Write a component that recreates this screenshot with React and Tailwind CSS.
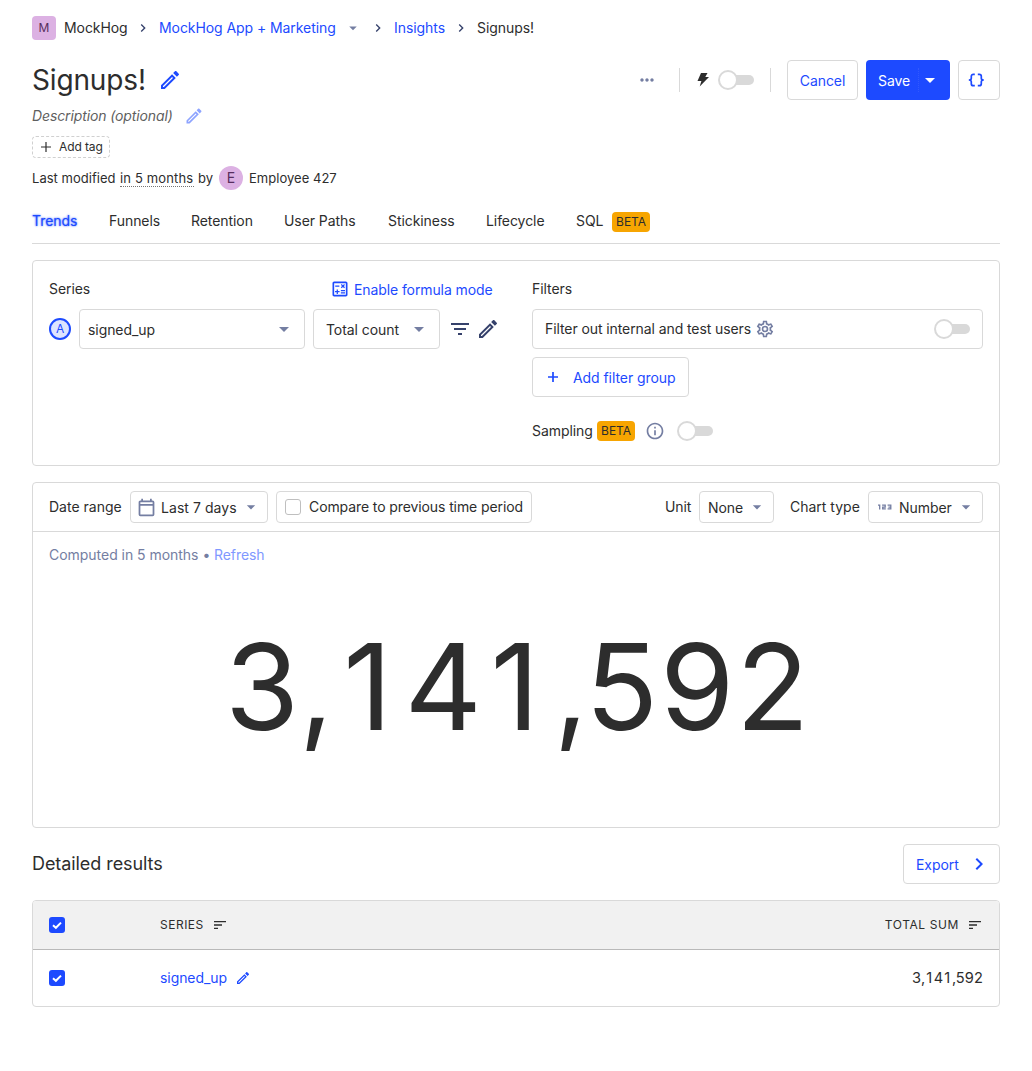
import React from 'react';
import {
  MdOutlineEdit,
  MdArrowDropDown,
  MdChevronRight,
  MdMoreHoriz,
  MdOutlineCalculate,
  MdFilterList,
  MdOutlineInfo,
  MdSort,
} from 'react-icons/md';

const box = 'flex items-center rounded border border-[#d9d9d9] bg-white';

function Toggle() {
  return (
    <span className="relative flex h-5 w-9 shrink-0 items-center">
      <span className="ml-1 h-[10px] w-8 rounded-full bg-[#d9d9d9]" />
      <span className="absolute left-0 top-0 size-5 rounded-full border-2 border-[#d9d9d9] bg-white" />
    </span>
  );
}

function Beta() {
  return (
    <span className="flex h-5 w-[38px] items-center justify-center rounded bg-[#f7a501] text-xs">BETA</span>
  );
}

function Caret({ className }) {
  return <MdArrowDropDown className={`shrink-0 ${className}`} />;
}

function Plus({ strokeWidth }) {
  return (
    <svg viewBox="0 0 16 16" className="size-4 shrink-0" fill="none" stroke="currentColor" strokeWidth={strokeWidth}>
      <path d="M8 3v10M3 8h10" />
    </svg>
  );
}

function Calendar() {
  return (
    <svg viewBox="0 0 24 24" className="size-[21px] shrink-0 text-[#747ea2]" fill="currentColor">
      <path d="M19 4h-1V2h-2v2H8V2H6v2H5c-1.110 0-2 .9-2 2v14a2 2 0 0 0 2 2h14a2 2 0 0 0 2-2V6a2 2 0 0 0-2-2m0 16H5V10h14zm0-12H5V6h14z" />
    </svg>
  );
}

function Checked() {
  return (
    <span className="flex size-4 shrink-0 items-center justify-center rounded-[3px] bg-[#1d4aff]">
      <svg viewBox="0 0 16 16" className="size-4" fill="none" stroke="#fff" strokeWidth="2">
        <path d="M4 8.2 6.9 10.8 12 5.6" />
      </svg>
    </span>
  );
}

function Gear() {
  return (
    <svg viewBox="0 0 24 24" className="size-5 shrink-0" fill="currentColor">
      <path d="M12 8a4 4 0 1 1 0 8 4 4 0 0 1 0-8m0 2a2 2 0 1 0 0 4 2 2 0 0 0 0-4m-2 12c-.25 0-.46-.18-.5-.42l-.37-2.65c-.63-.25-1.17-.59-1.69-.99l-2.49 1.01c-.22.08-.49 0-.61-.22l-2-3.46a.493.493 0 0 1 .12-.64l2.11-1.66L4.5 12l.07-1-2.11-1.63a.493.493 0 0 1-.12-.64l2-3.46c.12-.22.39-.31.61-.22l2.49 1c.52-.39 1.06-.73 1.69-.98l.37-2.65c.04-.24.25-.42.5-.42h4c.25 0 .46.18.5.42l.37 2.65c.63.25 1.17.59 1.69.98l2.49-1c.22-.09.49 0 .61.22l2 3.46c.13.22.07.49-.12.64L19.43 11l.07 1-.07 1 2.11 1.63c.19.15.25.42.12.64l-2 3.46c-.12.22-.39.31-.61.22l-2.49-1c-.52.39-1.06.73-1.69.98l-.37 2.65c-.04.24-.25.42-.5.42zm1.25-18-.37 2.61c-1.2.25-2.26.89-3.03 1.78L5.44 7.35l-.75 1.3L6.8 10.2a5.55 5.55 0 0 0 0 3.6l-2.12 1.56.75 1.3 2.43-1.04c.77.88 1.82 1.52 3.01 1.76l.37 2.62h1.52l.37-2.61c1.19-.25 2.24-.89 3.01-1.77l2.43 1.04.75-1.3-2.12-1.55c.4-1.17.4-2.44 0-3.61l2.11-1.55-.75-1.3-2.41 1.04a5.42 5.42 0 0 0-3.03-1.77L12.75 4z" />
    </svg>
  );
}

function Figures() {
  return (
    <span>
      3<span className="tracking-[0.08em]">,</span><span className="tracking-[0.105em]">1</span><span className="tracking-[0.07em]">4</span><span className="tracking-[0.12em]">1</span><span className="tracking-[-0.025em]">,</span><span className="tracking-[0.015em]">5</span><span className="tracking-[0.012em]">9</span>2
    </span>
  );
}

const tabs = [
  ['Funnels', 'w-[82px]'],
  ['Retention', 'w-[93px]'],
  ['User Paths', 'w-[104px]'],
  ['Stickiness', 'w-[98px]'],
  ['Lifecycle', 'w-[90px]'],
];

export default function App() {
  return (
    <main className="h-[1071px] w-[1032px] bg-white px-8 pt-4 font-[Inter,sans-serif] text-sm tracking-[-0.07px] text-[#2d2d2d]">
      <nav className="flex h-6 items-center">
        <span className="flex size-6 items-center justify-center rounded bg-[#dcb1e3] text-xs text-[#572e5e]">M</span>
        <span className="ml-2 w-[71px]">MockHog</span>
        <MdChevronRight className="size-4 text-[#35416b]" />
        <span className="ml-2 w-[185px] text-[#1d4aff]">MockHog App + Marketing</span>
        <Caret className="size-[18px] text-[#747ea2]" />
        <MdChevronRight className="ml-2 size-4 text-[#35416b]" />
        <span className="ml-2 w-[59px] text-[#1d4aff]">Insights</span>
        <MdChevronRight className="size-4 text-[#35416b]" />
        <span className="ml-2">Signups!</span>
      </nav>

      <header className="mt-5 flex h-10 items-center">
        <h1 className="w-[126px] text-[28px] leading-10 tracking-[-0.15px]">Signups!</h1>
        <MdOutlineEdit className="size-6 text-[#1d4aff]" />
        <div className="ml-auto flex items-center">
          <MdMoreHoriz className="size-5 text-[#747ea2]" />
          <span className="ml-[22px] h-6 w-px bg-[#d9d9d9]" />
          <svg viewBox="0 0 12 14" className="ml-[17px] h-[14px] w-3" fill="#2d2d2d">
            <path d="M4 0h6.5L8.3 4H12L2.7 13.6 4.4 8H.5z" />
          </svg>
          <span className="ml-[9px]"><Toggle /></span>
          <span className="ml-4 h-6 w-px bg-[#d9d9d9]" />
          <button className={`${box} ml-4 h-10 w-[71px] justify-center pt-0.5 text-[#1d4aff]`}>Cancel</button>
          <button className="ml-2 flex h-10 w-[84px] items-center rounded bg-[#1d4aff] pl-3 text-white">
            <span className="w-10 pt-0.5 text-left">Save</span>
            <span className="h-6 border-l border-dotted border-[#3158ff]" />
            <Caret className="-ml-px size-6" />
          </button>
          <button className={`${box} ml-2 h-10 w-[42px] pl-[9px] text-[#1d4aff]`}>
            <svg viewBox="0 0 16 14" className="h-[14px] w-4" fill="none" stroke="currentColor" strokeWidth="1.7">
              <path d="M6.800 1.300H5.300a2 2 0 0 0-2 2v1.900Q3.300 7 .8 7Q3.300 7 3.300 8.800v1.900a2 2 0 0 0 2 2h1.500M9.800 1.300H11.300a2 2 0 0 1 2 2v1.900Q13.300 7 15.800 7Q13.300 7 13.300 8.800v1.900a2 2 0 0 1-2 2H9.800" />
            </svg>
          </button>
        </div>
      </header>

      <div className="mt-1.5 flex h-5 items-center">
        <span className="w-[152px] italic tracking-[-0.12px] text-[#5f5f5f]">Description (optional)</span>
        <MdOutlineEdit className="size-5 text-[#8ea4ff]" />
      </div>
      <div className="mt-2.5 flex h-[22px] w-[78px] items-center rounded border border-dashed border-[#d0d0d0] pl-[5px] text-xs tracking-[-0.1px]">
        <Plus strokeWidth="1.2" />
        <span className="ml-[5px]">Add tag</span>
      </div>
      <div className="mt-2 flex h-6 items-center text-[13px] tracking-[0.03px]">
        <span className="w-[88px]">Last modified</span>
        <span className="w-[74px] border-b border-dotted border-[#747474] leading-4 tracking-[0.15px]">in 5 months</span>
        <span className="ml-1 w-[21px]">by</span>
        <span className="flex size-6 items-center justify-center rounded-full bg-[#dcb1e3] text-sm text-[#572e5e]">E</span>
        <span className="ml-1.5">Employee 427</span>
      </div>

      <div className="mt-[11px] flex h-[43px] items-center border-b border-[#d9d9d9] pb-0.5">
        <span className="w-[77px] text-[#1d4aff] [text-shadow:0_0_2px_#1d4aff]">Trends</span>
        {tabs.map(([name, width]) => <span key={name} className={width}>{name}</span>)}
        <span className="w-9">SQL</span>
        <span className="pt-0.5"><Beta /></span>
      </div>

      <section className="mt-4 flex h-[206px] rounded border border-[#d9d9d9] px-4 pt-4">
        <div className="w-[483px]">
          <div className="flex h-6 items-center">
            <span>Series</span>
            <span className="ml-auto mr-10 flex items-center text-[#1d4aff]">
              <MdOutlineCalculate className="size-5" />
              <span className="ml-1 w-[138px] whitespace-nowrap pt-0.5 tracking-[-0.1px]">Enable formula mode</span>
            </span>
          </div>
          <div className="mt-2 flex h-10 items-center">
            <span className="flex size-[22px] items-center justify-center rounded-full border-2 border-[#1d4aff] bg-[#dde4ff] text-xs text-[#1d4aff]">A</span>
            <button className={`${box} ml-2 h-10 w-[226px] justify-between pl-2 pr-2`}>
              <span className="pt-0.5">signed_up</span><Caret className="size-6 text-[#747ea2]" />
            </button>
            <button className={`${box} ml-2 h-10 w-[127px] justify-between pl-3 pr-2`}>
              <span className="pt-0.5">Total count</span><Caret className="size-6 text-[#747ea2]" />
            </button>
            <MdFilterList className="ml-2 size-6 text-[#35416b]" />
            <MdOutlineEdit className="ml-1 size-6 text-[#35416b]" />
          </div>
        </div>
        <div className="flex-1">
          <div className="flex h-6 items-center">Filters</div>
          <div className={`${box} mt-2 h-10 px-3`}>
            <span className="w-[206px] whitespace-nowrap tracking-[-0.09px]">Filter out internal and test users</span>
            <span className="ml-1 text-[#747ea2]"><Gear /></span>
            <span className="ml-auto"><Toggle /></span>
          </div>
          <button className={`${box} mt-2 h-10 w-[157px] pl-3 text-[#1d4aff]`}>
            <Plus strokeWidth="1.7" />
            <span className="ml-3 pt-0.5">Add filter group</span>
          </button>
          <div className="mt-6 flex h-5 items-center">
            <span className="w-[65px]">Sampling</span>
            <Beta />
            <MdOutlineInfo className="ml-2.5 size-5 text-[#747ea2]" />
            <span className="ml-3"><Toggle /></span>
          </div>
        </div>
      </section>

      <section className="mt-4 h-[346px] rounded border border-[#d9d9d9]">
        <div className="flex h-[49px] items-center border-b border-[#d9d9d9] px-4">
          <span className="w-[81px] tracking-normal">Date range</span>
          <button className={`${box} h-8 w-[138px] pl-[5px]`}>
            <Calendar />
            <span className="ml-1 w-20 pt-0.5 text-left tracking-[0.05px]">Last 7 days</span>
            <Caret className="size-5 text-[#747ea2]" />
          </button>
          <div className={`${box} ml-2 h-8 w-64 pl-2`}>
            <span className="size-4 rounded-[3px] border border-[#bfbfbf]" />
            <span className="ml-2 whitespace-nowrap tracking-[-0.1px]">Compare to previous time period</span>
          </div>
          <span className="ml-auto w-[34px]">Unit</span>
          <button className={`${box} h-8 w-[75px] justify-between pl-2 pr-1.5`}>
            <span className="pt-0.5">None</span><Caret className="size-5 text-[#747ea2]" />
          </button>
          <span className="ml-4 w-[78px] tracking-normal">Chart type</span>
          <button className={`${box} h-8 w-[115px] pl-2`}>
            <svg viewBox="0 0 16 16" className="size-4" fill="none" stroke="#747ea2" strokeWidth="1.3">
              <path d="M1 6.200H2.700V10.600M5.100 6.200H8.200V8.100H5.700V9.900H8.800M10.600 6.200H13.800V9.900H10.600M11.400 8.050H13.800" />
            </svg>
            <span className="ml-1.5 w-[57px] pt-0.5 text-left">Number</span>
            <Caret className="size-5 text-[#747ea2]" />
          </button>
        </div>
        <div className="mt-3 flex h-[22px] items-center px-4 text-[#747ea2]">
          <span className="w-[161px] whitespace-nowrap tracking-[-0.03px]">Computed in 5 months •</span><span className="ml-1 text-[#7f98ff]">Refresh</span>
        </div>
        <div className="flex h-[242px] items-center justify-center pl-0.5 text-[120px] leading-none tracking-normal"><Figures /></div>
      </section>

      <div className="mt-4 flex h-10 items-center justify-between">
        <h2 className="text-lg">Detailed results</h2>
        <button className={`${box} h-10 w-[97px] pl-3 text-[#1d4aff]`}>
          <span className="w-[51px] pt-0.5 text-left">Export</span>
          <MdChevronRight className="size-6" />
        </button>
      </div>

      <section className="mt-4 h-[107px] overflow-hidden rounded border border-[#d9d9d9]">
        <div className="flex h-[49px] items-center border-b border-[#b9b9b9] bg-[#f1f1f1] px-4 text-xs">
          <Checked />
          <span className="ml-[95px] w-[52px] tracking-[0.5px]">SERIES</span>
          <MdSort className="size-4" />
          <span className="ml-auto mr-2 tracking-[0.6px]">TOTAL SUM</span>
          <MdSort className="size-4" />
        </div>
        <div className="flex h-14 items-center px-4">
          <Checked />
          <span className="ml-[95px] w-[75px] text-[#1d4aff]">signed_up</span>
          <MdOutlineEdit className="size-4 text-[#1d4aff]" />
          <span className="ml-auto tracking-normal [font-size:14.6px]"><Figures /></span>
        </div>
      </section>
    </main>
  );
}
